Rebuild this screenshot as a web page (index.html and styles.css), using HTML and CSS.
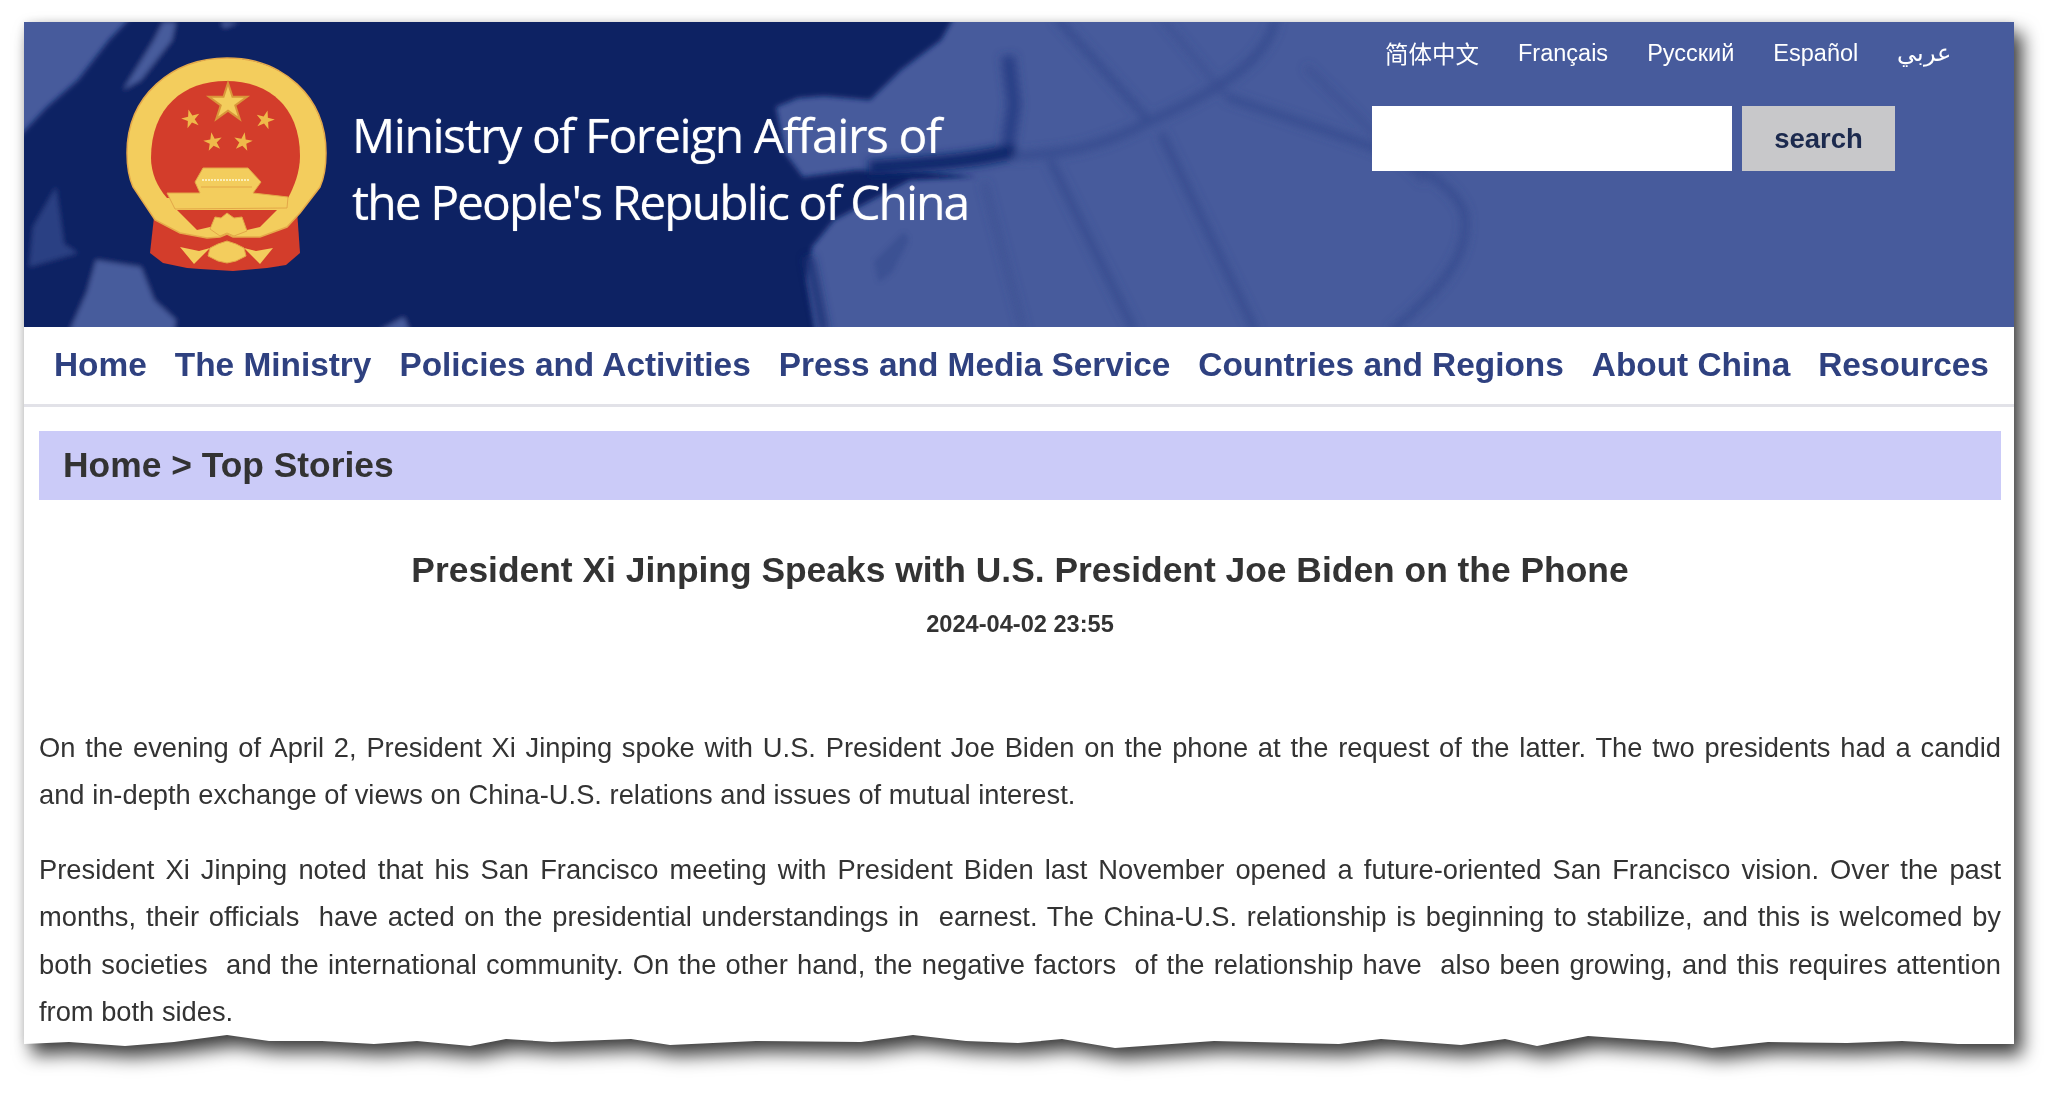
FILE: index.html
```html
<!DOCTYPE html>
<html lang="en">
<head>
<meta charset="utf-8">
<title>President Xi Jinping Speaks with U.S. President Joe Biden on the Phone</title>
<link rel="stylesheet" href="styles.css">
</head>
<body>
<div class="shadow">
<div class="page">
  <header class="banner">
    <svg class="banner-art" viewBox="0 0 1990 305" width="1990" height="305" aria-hidden="true">
      <defs>
        <filter id="b2"><feGaussianBlur stdDeviation="2.4"/></filter>
        <filter id="b4"><feGaussianBlur stdDeviation="4"/></filter>
        <filter id="b6"><feGaussianBlur stdDeviation="6"/></filter>
        <polygon id="star" points="0,-10 2.245,-3.09 9.51,-3.09 3.63,1.18 5.88,8.09 0,3.82 -5.88,8.09 -3.63,1.18 -9.51,-3.09 -2.245,-3.09"/>
      </defs>
      <rect width="1990" height="305" fill="#475b9c"/>
      <g filter="url(#b2)">
        <path fill="#0a2164" d="M-10 120 L23 85 L54 58 L85 18 L112 -10 L933 -10 L917 18 L877 48 L846 78 L800 74 L774 76 L752 85 L761 131 L779 155 L832 148 L899 150 L953 155 L886 158 L810 198 L788 225 L783 258 L792 315 L-10 315 Z"/>
        <path fill="#475b9c" d="M152 0 L139 0 L130 18 L99 68 L117 58 L148 18 Z M197 0 L215 0 L200 6 Z M72 238 L117 245 L130 278 L152 298 L150 310 L45 310 L63 270 Z M353 310 L380 295 L386 310 Z"/>
        <path fill="#475b9c" opacity=".55" d="M32 165 L9 205 L5 245 L54 231 L40 222 Z"/>
      </g>
      <g fill="none" filter="url(#b4)">
        <path stroke="#0f266b" stroke-width="15" d="M845 146 C900 142 950 140 992 128"/>
        <path stroke="#2a3f86" stroke-width="14" d="M984 34 L990 82 L984 122"/>
        <path stroke="#394d90" stroke-width="9" d="M1252 -5 C1245 30 1215 60 1124 100 C1090 118 1060 128 1026 131 C1010 133 1000 134 990 134"/>
        <path stroke="#394d90" stroke-width="8" d="M1032 -5 L1124 98 M1026 138 L1111 310 M1137 111 L1232 310 M1203 75 C1330 120 1420 140 1440 190 C1450 240 1400 280 1367 310"/>
        <path stroke="#394d90" stroke-width="6" opacity=".6" d="M1137 -5 L1203 75 M1282 45 L1400 160 M960 160 L1000 310"/>
        <path stroke="#1d3276" stroke-width="9" d="M785 235 L800 310"/>
      </g>
      <path fill="#394d90" opacity=".7" filter="url(#b2)" d="M850 240 L880 210 L885 218 L868 250 L855 260 Z"/>
      <g class="emblem">
        <path fill="#d33d2b" d="M131 186 L126 231 L139 241 L163 246 L176 247 L209 249 L243 246 L262 243 L276 231 L273 188 Z"/>
        <path fill="#f3cd5d" stroke="#e5a94a" stroke-width="1.5" d="M103 131 C103 74 148 36 203 36 C258 36 302 74 302 131 C302 145 300 156 296 165 L276 191 L263 205 L236 215 L209 215 L203 212 L196 215 L183 216 L156 211 L131 198 L109 165 C105 156 103 145 103 131 Z"/>
        <path fill="#d33d2b" d="M127 136 C127 85 160 59 202 59 C245 59 276 85 276 134 C276 150 270 165 264 176 L143 176 C133 165 127 150 127 136 Z"/>
        <path fill="#d33d2b" d="M153 188 L253 188 L236 205 L223 208 L186 205 L173 208 Z"/>
        <path fill="#f3cd5d" stroke="#e3a748" d="M179 146 L224 146 L237 160 L229 171 L264 175 L263 186 L151 187 L143 171 L176 171 L171 160 Z"/>
        <path fill="none" stroke="#fbeeb8" stroke-width="2" stroke-dasharray="2 1" d="M178 158 L226 158"/>
        <path fill="none" stroke="#e3a748" d="M177 165 L228 165"/>
        <path fill="#f3cd5d" stroke="#e3a748" d="M186 207 L191 195 L197 196 L203 191 L210 196 L218 195 L223 209 L210 214 L203 211 L196 214 Z"/>
        <path fill="#f3cd5d" d="M156 225 L175 229 L186 226 L170 242 Z M249 226 L232 229 L220 226 L236 242 Z"/>
        <path fill="#f3cd5d" stroke="#e3a748" d="M186 226 L194 222 L203 219 L212 222 L220 226 L222 234 L212 239 L203 241 L194 239 L184 234 Z"/>
        <use href="#star" transform="translate(204 81) scale(2)" fill="#f3cd5d" stroke="#d9963a"/>
        <use href="#star" transform="translate(167 97) rotate(-15) scale(.98)" fill="#efb94a"/>
        <use href="#star" transform="translate(241 98) rotate(15) scale(.98)" fill="#efb94a"/>
        <use href="#star" transform="translate(189 120) rotate(-10) scale(.98)" fill="#efb94a"/>
        <use href="#star" transform="translate(219 120) rotate(10) scale(.98)" fill="#efb94a"/>
      </g>
    </svg>
    <div class="logo-text">
      <span class="logo-line logo-first">Ministry of Foreign Affairs of</span>
      <span class="logo-line">the People's Republic of China</span>
    </div>
    <div class="tools">
      <nav class="langs">
        <a class="lang lang-cn">简体中文</a>
        <a class="lang">Français</a>
        <a class="lang">Русский</a>
        <a class="lang">Español</a>
        <a class="lang" lang="ar">عربي</a>
      </nav>
      <form class="search">
        <input class="search-input" type="text" aria-label="search">
        <button class="search-btn" type="button">search</button>
      </form>
    </div>
  </header>
  <nav class="mainnav">
    <a>Home</a>
    <a>The Ministry</a>
    <a>Policies and Activities</a>
    <a>Press and Media Service</a>
    <a>Countries and Regions</a>
    <a>About China</a>
    <a>Resources</a>
  </nav>
  <main class="article">
    <div class="crumb">Home &gt; Top Stories</div>
    <h1 class="title">President Xi Jinping Speaks with U.S. President Joe Biden on the Phone</h1>
    <div class="date">2024-04-02 23:55</div>
    <p class="para">On the evening of April 2, President Xi Jinping spoke with U.S. President Joe Biden on the phone at the request of the latter. The two presidents had a candid and&nbsp;in-depth exchange of views on China-U.S. relations and issues of mutual interest.</p>
    <p class="para">President Xi Jinping noted that his San Francisco meeting with President Biden last November opened a future-oriented San Francisco vision. Over the past months, their officials&nbsp; have acted on the presidential understandings in&nbsp; earnest. The China-U.S. relationship is beginning to stabilize, and this is welcomed by both societies&nbsp; and the international community. On the other hand, the negative factors&nbsp; of the relationship have&nbsp; also been growing, and this requires attention from both sides.</p>
  </main>
</div>
</div>
</body>
</html>
```
FILE: styles.css
```css
html, body { margin: 0; padding: 0; background: #fff; overflow: hidden; }
body { width: 2062px; height: 1095px; font-family: "Liberation Sans", Arial, sans-serif; color: #333; }
a { color: inherit; text-decoration: none; }

.shadow {
  width: 1990px;
  margin: 22px 0 0 24px;
  filter: drop-shadow(0 0 5px rgba(0,0,0,.1)) drop-shadow(8px 11px 9px rgba(0,0,0,.75));
}
.page {
  width: 1990px;
  height: 1028px;
  overflow: hidden;
  background: #fff;
  clip-path: polygon(0 0, 1990px 0, 1990px 1022px, 1934px 1022px, 1878px 1019px, 1823px 1021px, 1744px 1020px, 1688px 1026px, 1651px 1020px, 1564px 1014px, 1513px 1024px, 1481px 1017px, 1437px 1023px, 1357px 1017px, 1315px 1022px, 1190px 1019px, 1091px 1026px, 1038px 1017px, 1006px 1020px, 994px 1021px, 942px 1019px, 889px 1013px, 837px 1020px, 732px 1019px, 646px 1023px, 607px 1017px, 528px 1020px, 482px 1017px, 446px 1024px, 393px 1019px, 350px 1022px, 298px 1019px, 245px 1019px, 203px 1013px, 150px 1020px, 101px 1024px, 45px 1020px, 0 1022px);
}

.banner { position: relative; height: 305px; display: flex; justify-content: space-between; overflow: hidden; }
.banner-art { position: absolute; left: 0; top: 0; display: block; }

.logo-text {
  position: relative;
  padding: 79px 0 0 328px;
  font-family: "Open Sans", sans-serif;
  font-size: 48px;
  line-height: 67px;
  letter-spacing: -1.95px;
  color: #fff;
  text-shadow: 0 0 1px rgba(255,255,255,.6);
}
.logo-line { display: block; white-space: nowrap; }
.logo-first { letter-spacing: -1.45px; }

.tools { position: relative; width: 642px; }
.langs { display: flex; gap: 39px; padding: 14px 0 0 13px; height: 70px; box-sizing: border-box; align-items: baseline; }
.lang { font-size: 23.5px; line-height: 34px; color: #fff; white-space: nowrap; }
.lang-cn { font-family: "Liberation Sans", "Noto Sans CJK SC", sans-serif; transform: translateY(2px); }
.search { display: flex; gap: 10px; margin: 14px 0 0; }
.search-input { width: 360px; height: 65px; border: 0; padding: 0; background: #fff; display: block; }
.search-btn { width: 153px; height: 65px; border: 0; padding: 0; background: #c8c8ca; color: #1c2a4e; font: bold 27.5px "Liberation Sans", Arial, sans-serif; }

.mainnav {
  height: 75px;
  padding: 0 25px 2px 30px;
  display: flex;
  justify-content: space-between;
  align-items: center;
  border-bottom: 3px solid #e2e2e8;
  font-weight: bold;
  font-size: 33.4px;
  color: #2f4180;
}

.article { padding: 24px 13px 0 15px; }
.crumb { height: 69px; line-height: 69px; padding-left: 24px; background: #cbcbf8; font-weight: bold; font-size: 35.4px; color: #333; }
.title { margin: 46px 0 0; text-align: center; font-size: 35.4px; line-height: 48px; font-weight: bold; color: #333; }
.date { margin-top: 11.5px; text-align: center; font-size: 23.6px; line-height: 36px; font-weight: bold; }
.para { margin: 0 0 27.6px; font-size: 27.3px; line-height: 47.4px; text-align: justify; color: #333; }
.date + .para { margin-top: 82px; }
```
